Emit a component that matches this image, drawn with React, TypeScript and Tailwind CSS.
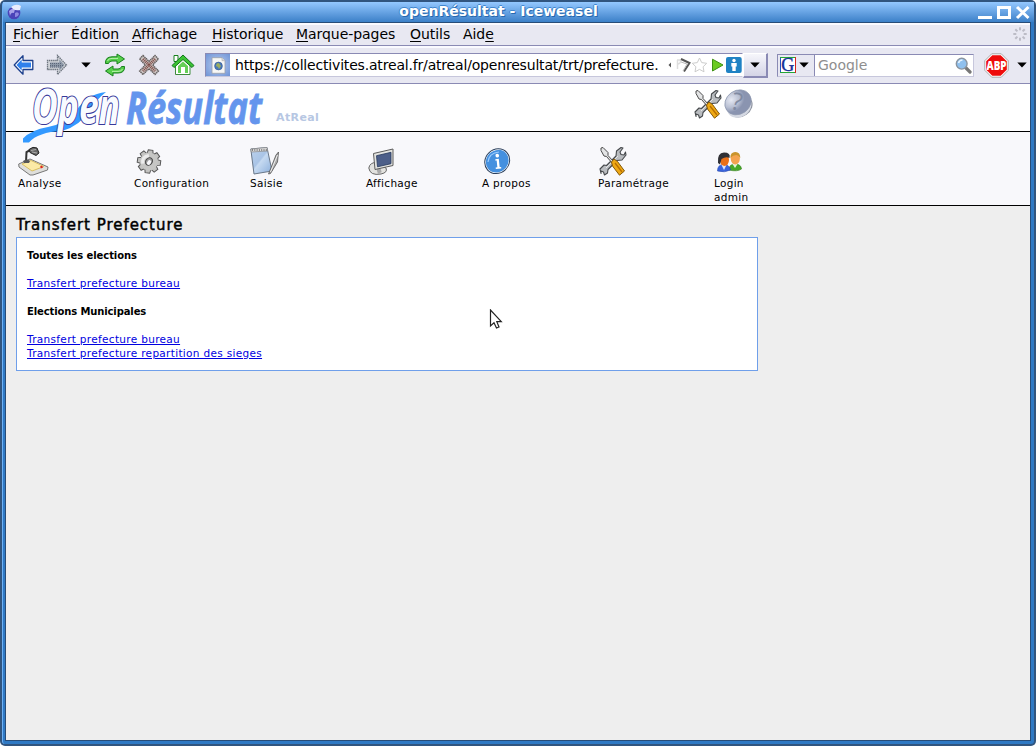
import React from "react";

const sans = "font-['DejaVu_Sans',sans-serif]";

function MozillaGlobe() {
  return (
    <svg width="16" height="16" viewBox="0 0 16 16">
      <circle cx="7" cy="9" r="6.300" fill="#4a42b8" />
      <path d="M2 7q3-3 6-2l-1 4q-3-1-4 3Z" fill="#a9a3ea" />
      <path d="M8 9q3-2 4 1q-1 3-4 3Z" fill="#8e88e0" />
      <path d="M4 3q5-4 10-1l-1 4q-4 1-7-1Z" fill="#e9ecfb" />
    </svg>
  );
}

function BackIcon() {
  return (
    <svg width="22" height="22" viewBox="0 0 22 22">
      <path d="M1.200 11 10 1.800V6.500H19.800V15.500H10V20.200Z" fill="#fff" stroke="#1c3f8c" strokeWidth="1.300" strokeLinejoin="round" />
      <path d="M3.500 11 8.700 5.500V8.500H18V13.500H8.700V16.500Z" fill="#2f80ec" />
    </svg>
  );
}

function ForwardIcon() {
  return (
    <svg width="22" height="22" viewBox="0 0 22 22">
      <path d="M20.500 11 11.500 1.500V6.500H1.500V15.500H11.500V20.500Z" fill="#d0d3d8" stroke="#6f7681" strokeWidth="1.300" strokeDasharray="1.500 .6" />
      <path d="M18.500 11 13.300 5.300V8.500H4V13.500H13.300V16.700Z" fill="#8d98a8" />
      <path d="M4 9.500h12M4 11.500h13M4 13h12" stroke="#5c6779" strokeDasharray="1 1" />
    </svg>
  );
}

function ReloadIcon() {
  return (
    <svg width="22" height="24" viewBox="0 0 22 24">
      <g fill="#57cf4b" stroke="#16801c" strokeLinejoin="round">
        <path d="M1.500 10.500Q1 4 8 3.800h5V1l7.500 5-7.500 5V8H8Q5 8 4.500 10.500Z" />
        <path d="M20.500 13.500Q21 20 14 20H9v3l-7.500-5L9 13v3h5q3 0 3.500-2.500Z" />
      </g>
      <path d="M3.500 8Q4.500 5.200 8 5.400h6M18.500 16q-1 2.600-4.500 2.400H8" fill="none" stroke="#b8f2ac" />
    </svg>
  );
}

function StopIcon() {
  return (
    <svg width="22" height="22" viewBox="0 0 22 22">
      <path d="M5 1.500 11 7.300 17 1.500 20.500 5 14.700 11 20.500 17 17 20.500 11 14.700 5 20.500 1.500 17 7.300 11 1.500 5Z" fill="#c9c1bf" stroke="#5f5a5a" strokeWidth="1.300" strokeDasharray="1.500 .5" />
      <path d="M5 5 17 17M17 5 5 17" stroke="#7d4a45" strokeWidth="3" strokeDasharray="1 .8" />
    </svg>
  );
}

function HomeIcon() {
  return (
    <svg width="24" height="22" viewBox="0 0 24 22">
      <path d="M3 1.500h4v6H3Z" fill="#fff" stroke="#16801c" />
      <path d="M4.500 10V20.500H19V10L12 4Z" fill="#fff" stroke="#3d8b3d" />
      <path d="M12 1 23 11.500 21 13.500 12 5.500 3 13.500 1 11.500Z" fill="#3cc334" stroke="#0f741a" strokeLinejoin="round" />
      <path d="M7 12l5-4.500 5 4.500v7h-3v-6h-4v6H7Z" fill="#65cf57" />
    </svg>
  );
}

function Caret({ className = "" }: { className?: string }) {
  return (
    <svg className={className} width="10" height="6" viewBox="0 0 10 6">
      <path d="M.3.5h9.400L5 5.600Z" fill="#000" />
    </svg>
  );
}

function PageIcon() {
  return (
    <svg width="15" height="17" viewBox="0 0 15 17">
      <path d="M1 .7h10l3 3v12.600H1Z" fill="#f7f7f5" stroke="#9aa0a8" strokeWidth=".8" />
      <path d="M11 .7v3h3" fill="#ddd" stroke="#aaa" strokeWidth=".6" />
      <circle cx="7.500" cy="9" r="3.900" fill="#4b79b8" stroke="#31588e" strokeWidth=".6" />
      <path d="M5.500 7q2-2 3 0l1.500 2-2 3-1-2-2-1Z" fill="#9cae5f" />
    </svg>
  );
}

function UrlIcons() {
  return (
    <svg className="shrink-0" width="76" height="18" viewBox="0 0 76 18">
      <path d="M5 6.500v5L2.500 9Z" fill="#555" />
      <path d="M11.500 4v9M11 4h3q2 3-3 4.500" stroke="#ddd" strokeWidth="1.500" fill="none" />
      <path d="M15 3 23.500 7 18 15.500" fill="none" stroke="#555" strokeWidth="2" />
      <path d="M15 6 21 8 17 15" fill="none" stroke="#bbb" />
      <path d="m33.500 2 2.200 4.600 5 .7-3.600 3.500.9 5-4.500-2.400-4.500 2.400.9-5-3.600-3.500 5-.7Z" fill="#fff" stroke="#ccc" />
      <path d="M46.500 3.200 57 9 46.500 15Z" fill="#6bcb22" stroke="#3d9215" />
      <rect x="60" y="1" width="15.700" height="16" rx="2" fill="#1f82c4" />
      <circle cx="68" cy="4.500" r="1.700" fill="#fff" />
      <path d="M65.300 7h5.400v3.500h-1V15h-3.400v-4.500h-1Z" fill="#fff" />
    </svg>
  );
}

function GoogleIcon() {
  return (
    <svg className="overflow-visible" width="16" height="16" viewBox="0 0 16 16">
      <path d="M0 0h16v16H0Z" fill="#fff" />
      <path d="M.5 16V.5" stroke="#2456c5" />
      <path d="M0 .5H16M0 15.500H16" stroke="#24a538" />
      <path d="M15.500 0V16" stroke="#d7261e" />
      <text x="1.300" y="14" fontFamily="Liberation Serif, serif" fontSize="18" fill="#122f96" stroke="#122f96" strokeWidth=".4">G</text>
    </svg>
  );
}

function SearchIcon() {
  return (
    <svg width="17" height="17" viewBox="0 0 17 17">
      <path d="m10.500 10.500 4.500 4.500" stroke="#777" strokeWidth="3.200" strokeLinecap="round" />
      <circle cx="6.700" cy="6.700" r="5.400" fill="#8fc0ee" stroke="#8a94a0" strokeWidth="1.400" />
      <path d="M3.500 6q1-3 4-3" stroke="#e7f4ff" strokeWidth="1.600" fill="none" />
    </svg>
  );
}

function AdblockIcon() {
  return (
    <svg width="25" height="25" viewBox="0 0 25 25">
      <path d="M7.700.8h9.600l6.900 6.900v9.600l-6.900 6.900H7.700L.8 17.300V7.700Z" fill="#fff" stroke="#a7a7a7" />
      <path d="M8.300 2.200h8.400l6.100 6.100v8.400l-6.100 6.100H8.300l-6.100-6.100V8.300Z" fill="#ee0b0b" />
      <text x="2.500" y="16.500" textLength="20" lengthAdjust="spacingAndGlyphs" fontFamily="Open Sans, sans-serif" fontWeight="800" fontSize="11.500" fill="#fff">ABP</text>
    </svg>
  );
}

function Throbber() {
  return (
    <svg width="14" height="14" viewBox="0 0 14 14" fill="#bcbcc6">
      {[0, 45, 90, 135, 180, 225, 270, 315].map((a) => (
        <rect key={a} x="6" y=".3" width="2" height="3" transform={`rotate(${a} 7 7)`} />
      ))}
    </svg>
  );
}

function LampIcon() {
  return (
    <svg width="32" height="30" viewBox="0 0 32 30">
      <path d="M.7 18 12 13 30 21 29.500 24 15 29 12 29 1 21Z" fill="#dededb" stroke="#777" />
      <path d="M4 18 13 14.500 26 20.500 14 25Z" fill="#fbeaa6" stroke="#d8be62" />
      <path d="M8 16 8.500 6 14 3" fill="none" stroke="#333" strokeWidth="2" />
      <path d="M5 15q4-3 7 0l-1 2H6Z" fill="#555" />
      <path d="M11 3.500q4-3.500 8-1.500l2 5-3 2.500-6-3Z" fill="#666" stroke="#222" />
      <path d="M13 4.500l5-1M14 6l5 1" stroke="#aaa" />
      <path d="M22.500 21.500l2-1" stroke="#d22" strokeWidth="2" />
    </svg>
  );
}

function GearIcon() {
  return (
    <svg width="26" height="26" viewBox="0 0 26 26">
      <g transform="translate(13 12.500) rotate(8)">
        <g fill="#c2c2c0" stroke="#555">
          {[0, 45, 90, 135, 180, 225, 270, 315].map((a) => (
            <path key={a} d="M-3.200-7-2.300-11.600H2.300L3.200-7Z" transform={`rotate(${a})`} />
          ))}
        </g>
        <circle r="9" fill="#c6c6c4" />
        <path d="M-6 3q-2-7 5-9" fill="none" stroke="#ececec" strokeWidth="3" />
        <ellipse rx="3.200" ry="4" fill="#999" stroke="#444" transform="rotate(30)" />
        <ellipse cx=".7" cy=".8" rx="1.800" ry="2.600" fill="#f8f8fb" transform="rotate(30)" />
      </g>
    </svg>
  );
}

function NotebookIcon() {
  return (
    <svg width="31" height="30" viewBox="0 0 31 30">
      <defs>
        <linearGradient id="sheet" x2="1" y2="1">
          <stop stopColor="#bcd2ec" />
          <stop offset=".45" stopColor="#a9c4e6" />
          <stop offset=".5" stopColor="#c6daf1" />
          <stop offset="1" stopColor="#8aaedb" />
        </linearGradient>
      </defs>
      <path d="M.8 3 17 1.500 22 25 4 28Z" fill="url(#sheet)" stroke="#697788" />
      <path d="M.8 3 17 1.500 17.600 5 1.300 6Z" fill="#ddd" stroke="#888" strokeWidth=".7" />
      <path d="M2 4h15" stroke="#666" strokeWidth="1.600" strokeDasharray="1 1.300" />
      <path d="M28.500 6 27.500 16 20.500 27.500 18.500 28 19.500 25.500 26 9Z" fill="#aaa" stroke="#555" strokeWidth=".8" />
      <path d="M27.500 9 20.500 26" stroke="#eee" />
    </svg>
  );
}

function MonitorIcon() {
  return (
    <svg width="26" height="28" viewBox="0 0 26 28">
      <path d="M.8 20Q2 14 9 14.500L18 20q2 4.500-5 6Q2 28 .8 20Z" fill="#e2e2df" stroke="#666" />
      <path d="M11 17q-1 5 1 8" stroke="#aaa" strokeWidth="4" />
      <path d="M5.500 5.500 25 1V17.500L7 21.500Z" fill="#e4e4e0" stroke="#5c5c5c" />
      <path d="M8.500 7.700 23 4.300V15.700L9.500 18.800Z" fill="#4d5f89" stroke="#26385d" strokeWidth=".8" />
    </svg>
  );
}

function InfoIcon() {
  return (
    <svg width="27" height="27" viewBox="0 0 27 27">
      <ellipse cx="13.200" cy="13.200" rx="13" ry="11.800" fill="#fff" stroke="#2a3f5c" transform="rotate(-43 13.200 13.200)" />
      <ellipse cx="13.200" cy="13.200" rx="11.900" ry="10.800" fill="#4490df" transform="rotate(-43 13.200 13.200)" />
      <path d="M4 14Q5 5 15 4" fill="none" stroke="#9accff" strokeWidth="1.200" />
      <g transform="rotate(-6 13 13)" fill="#fff">
        <circle cx="13.800" cy="7.700" r="1.800" />
        <path d="M11.500 11h3.500v8.300H16.500V20.800h-5.500v-1.500h1.700v-6.800H11.500Z" />
      </g>
    </svg>
  );
}

function ToolsIcon() {
  return (
    <svg width="28" height="30" viewBox="0 0 28 30">
      <path d="M2 27.500 1 23l4-4 2.500.5L17 10l.5-5L22 1.500l2 .5-3 4 1 2.500 3 .5 1.500-3 .5 3-4 5-5 .5-9 9-.5 3.500-3 2-1-3-2.500-1Z" fill="#b9bcc0" stroke="#46494c" strokeWidth="1.100" strokeLinejoin="round" />
      <path d="M7 22 19 10" stroke="#e6e6e6" />
      <path d="M2 2 4 1.500 9 6.500v3l5.500 6-1.500 1.300L7.500 10.500 5 10 2 4.500Z" fill="#e3e4e5" stroke="#4b4b4b" />
      <path d="m12.500 16 2.500-3 3.500 2.500 7 9.500-5 4.200-7-9.200Z" fill="#efa914" stroke="#835707" strokeLinejoin="round" />
      <path d="m16 17 7 9" stroke="#b86e00" strokeWidth="1.300" />
    </svg>
  );
}

function HelpIcon() {
  return (
    <svg className="overflow-visible" width="31" height="30" viewBox="0 0 31 30">
      <defs>
        <radialGradient id="help" cx=".35" cy=".25">
          <stop stopColor="#e6e9f3" />
          <stop offset=".6" stopColor="#b9c0d3" />
          <stop offset="1" stopColor="#8a94b0" />
        </radialGradient>
      </defs>
      <ellipse cx="18" cy="18" rx="12.500" ry="9.500" transform="rotate(-35 18 18)" fill="#8d93a0" />
      <ellipse cx="17" cy="16" rx="13" ry="11" transform="rotate(-35 18 18)" fill="#d5d9e3" />
      <ellipse cx="14.800" cy="13.300" rx="13.800" ry="11.800" transform="rotate(-35 15 13)" fill="url(#help)" stroke="#8c96ad" strokeWidth=".7" />
      <text x="8.500" y="21" fontFamily="Open Sans, sans-serif" fontSize="24" fill="#808aa2" transform="rotate(12 14 14)">?</text>
    </svg>
  );
}

function UsersIcon() {
  return (
    <svg width="25" height="22" viewBox="0 0 25 22">
      <path d="M12 19q0-6 6-6t6.500 5q-4 3-12.500 1Z" fill="#49a928" stroke="#2f7c18" strokeWidth=".6" />
      <path d="m15.500 13 2.500 4 2.500-4Z" fill="#e9f7df" />
      <ellipse cx="18.300" cy="7.500" rx="4.600" ry="6" fill="#f5a450" />
      <path d="M13.300 7q0-6 5-6t5 6q-2-3-4-3-3.500 0-6 3Z" fill="#c9952d" />
      <path d="M.5 20q0-6.500 6-6.500t7 5.500q-6 3-13 1Z" fill="#3a64dd" stroke="#2347b0" strokeWidth=".6" />
      <path d="m4.500 14 2.500 5 2.500-5Z" fill="#d9e6ff" />
      <ellipse cx="7.500" cy="9" rx="4.500" ry="6" fill="#e96f17" />
      <path d="M1 12Q0 1.500 7 1.500T12.500 7Q9 5 4.500 8L3 13.500Z" fill="#303035" />
    </svg>
  );
}

function Logo() {
  return (
    <svg className="absolute top-0 left-[14px] z-10 overflow-visible" width="246" height="62" viewBox="20 84 246 62">
      <path d="M23 142.500V138.500Q31 130 48 127 65 124 76 111 87 94 106 92Q97 99 90 110 80 126 62 131 38 132 29 142.500Z" fill="#3399ff" />
      <text x="32" y="123.500" textLength="88" lengthAdjust="spacingAndGlyphs" fontFamily="Open Sans, sans-serif" fontStyle="italic" fontWeight="700" fontSize="48" fill="#f8fbff" stroke="#39399a" strokeWidth="2.200" paintOrder="stroke">Open</text>
      <text x="126" y="124" textLength="136" lengthAdjust="spacingAndGlyphs" fontFamily="Open Sans, sans-serif" fontStyle="italic" fontWeight="700" fontSize="44" fill="#6495ed" stroke="#6495ed" strokeWidth=".8">Résultat</text>
    </svg>
  );
}

const menus: [string, string, string, string][] = [
  ["", "F", "ichier", "w-[58px]"],
  ["Éditio", "n", "", "w-[61px]"],
  ["", "A", "ffichage", "w-[80px]"],
  ["", "H", "istorique", "w-[84px]"],
  ["", "M", "arque-pages", "w-[114px]"],
  ["", "O", "utils", "w-[53px]"],
  ["Aid", "e", "", "w-[40px]"],
];

const actions: { label: string; sub?: string; icon: React.ReactNode }[] = [
  { label: "Analyse", icon: <LampIcon /> },
  { label: "Configuration", icon: <span className="pl-[2px] pb-px"><GearIcon /></span> },
  { label: "Saisie", icon: <NotebookIcon /> },
  { label: "Affichage", icon: <span className="pl-[2px]"><MonitorIcon /></span> },
  { label: "A propos", icon: <span className="pl-[2px] pb-px"><InfoIcon /></span> },
  { label: "Paramétrage", icon: <span className="pl-px"><ToolsIcon /></span> },
  { label: "Login", sub: "admin", icon: <span className="pl-[3px] pb-[3px]"><UsersIcon /></span> },
];

function TitleBar() {
  return (
    <div className="flex h-[20px] shrink-0 items-center bg-linear-to-b from-[#94c8ff] to-[#3b80c8] pr-[3px] pl-[4px]">
      <MozillaGlobe />
      <h1 className="flex-1 pr-[4px] pb-[2px] text-center text-[14px] leading-[18px] font-bold text-white [text-shadow:1px_1px_0_#2768ae,-1px_0_0_#3f86cf,0_-1px_0_#3f86cf]">
        openRésultat - Iceweasel
      </h1>
      <svg width="53" height="18" viewBox="0 0 53 18">
        <path d="M0 13h14v3H0Z" fill="#fff" />
        <path d="M20.500 4.500h11v10h-11Z" fill="none" stroke="#fff" strokeWidth="3" />
        <path d="m39 4 11.500 11M50.500 4 39 15" stroke="#fff" strokeWidth="3" />
      </svg>
    </div>
  );
}

function MenuBar() {
  return (
    <div className="flex h-[23px] shrink-0 items-center border-t-2 border-b border-t-[#fafaff] border-b-[#8a8ab4] bg-[#e8e8f2] pr-[3px] pb-[2px] pl-[7px] text-[14px] leading-[18px]">
      {menus.map(([a, u, b, w]) => (
        <span key={a + u + b} className={`${w} shrink-0 tracking-[-0.05px] whitespace-nowrap`}>
          {a}
          <span className="underline decoration-1 underline-offset-[2px]">{u}</span>
          {b}
        </span>
      ))}
      <span className="ml-auto"><Throbber /></span>
    </div>
  );
}

function ToolBar() {
  return (
    <div className="flex h-[38px] shrink-0 items-center border-t-2 border-b border-t-[#fafaff] border-b-[#8a8ab4] bg-[#e8e8f2] pb-px pl-[7px] text-[14px]">
      <BackIcon />
      <span className="ml-[11px]"><ForwardIcon /></span>
      <Caret className="ml-[13px]" />
      <span className="ml-[13px]"><ReloadIcon /></span>
      <span className="ml-[12px]"><StopIcon /></span>
      <span className="ml-[11px]"><HomeIcon /></span>
      <div className="ml-[10px] flex h-[24px] w-[538px] items-center border border-t-[#8a8ab4] border-r-white border-b-[#c7c7dc] border-l-[#8a8ab4] bg-white">
        <div className="flex h-full w-[24px] shrink-0 items-center justify-center bg-radial from-[#bccdf0] to-[#6f94d5]"><PageIcon /></div>
        <span className="flex-1 pl-[5px] tracking-[-0.18px] whitespace-nowrap">
          https://collectivites.atreal.fr/atreal/openresultat/trt/prefecture.
        </span>
        <UrlIcons />
      </div>
      <div className="flex h-[25px] w-[25px] items-center justify-center border-t border-r-2 border-b-2 border-l border-t-white border-r-[#8a8ab4] border-b-[#8a8ab4] border-l-white bg-linear-to-b from-[#f6f6fb] to-[#d4d4e6]"><Caret /></div>
      <div className="ml-[9px] flex h-[23px] w-[197px] items-center border border-t-[#8a8ab4] border-r-[#c7c7dc] border-b-[#c7c7dc] border-l-[#8a8ab4] bg-white">
        <div className="flex h-full w-[37px] items-center gap-[3px] border-r border-[#8a8ab4] bg-[#e8e8f2] pl-[2px]">
          <GoogleIcon />
          <Caret />
        </div>
        <span className="pl-[3px] text-[#8e8e8e]">Google</span>
        <span className="ml-auto pr-[1px]"><SearchIcon /></span>
      </div>
      <span className="ml-[10px]"><AdblockIcon /></span>
      <Caret className="ml-[8px]" />
    </div>
  );
}

function SiteHeader() {
  return (
    <header className="relative flex h-[48px] shrink-0 items-start border-b border-black bg-white">
      <Logo />
      <span className="w-[314px] shrink-0 pt-[27px] pl-[270px] text-[11px] leading-[14px] font-bold tracking-[0.4px] text-[#b7c7e3]">AtReal</span>
      <div className="ml-[374px] flex gap-[1px] pt-[5px]">
        <ToolsIcon />
        <HelpIcon />
      </div>
    </header>
  );
}

function ActionBar() {
  return (
    <nav className="flex h-[74px] shrink-0 border-b border-black bg-[#f8f8fb] pl-[12px] text-[10.5px] leading-[14px] tracking-[0.3px]">
      {actions.map(({ label, sub, icon }) => (
        <div key={label} className="flex w-[116px] shrink-0 flex-col">
          <div className="flex h-[44px] items-end">{icon}</div>
          <span>{label}</span>
          {sub && <span>{sub}</span>}
        </div>
      ))}
    </nav>
  );
}

function Link({ children }: { children: string }) {
  return (
    <a href="#" className="block w-fit text-[10.5px] tracking-[0.32px] text-[#0000e0] underline decoration-1 underline-offset-[1px]">
      {children}
    </a>
  );
}

export default function App() {
  return (
    <div className={`${sans} h-[746px] w-[1036px] overflow-hidden bg-white text-black [font-variant-ligatures:none]`}>
      <div className="flex h-full flex-col rounded-[5px] bg-[#31557f] p-[2px]">
        <div className="flex min-h-0 flex-1 flex-col rounded-[3px] border-l border-[#6eb1f5] bg-[#2f79c4]">
          <TitleBar />
          <div className="mr-[3px] mb-[3px] ml-[2px] flex min-h-0 flex-1 flex-col border border-[#274c78]">
            <MenuBar />
            <ToolBar />
            <SiteHeader />
            <ActionBar />
            <main className="relative flex-1 bg-[#eeeeee] pl-[10px]">
              <h2 className="pt-[8px] text-[15px] leading-[22px] tracking-[0.97px] [-webkit-text-stroke:0.45px_black]">Transfert Prefecture</h2>
              <section className="mt-[1px] h-[134px] w-[742px] border border-[#6f9fea] bg-white px-[10px] pt-[11px] text-[10px] leading-[14px]">
                <h3 className="pb-[13px] font-bold tracking-[-0.06px]">Toutes les elections</h3>
                <Link>Transfert prefecture bureau</Link>
                <h3 className="pt-[15px] pb-[13px] font-bold tracking-[-0.12px]">Elections Municipales</h3>
                <Link>Transfert prefecture bureau</Link>
                <Link>Transfert prefecture repartition des sieges</Link>
              </section>
              <svg className="absolute top-[103px] left-[483px]" width="14" height="21" viewBox="0 0 14 21">
                <path d="M1.500 1V17L5 13.800 7.500 19 10 18 7.800 12.700H12.300Z" fill="#fff" stroke="#222" strokeWidth="1.200" />
              </svg>
            </main>
          </div>
        </div>
      </div>
    </div>
  );
}
